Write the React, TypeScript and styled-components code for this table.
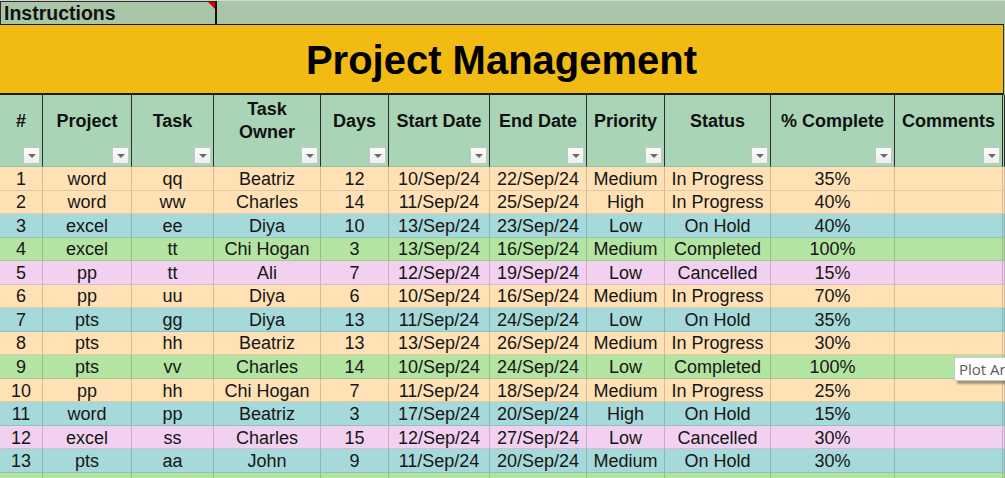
import React from 'react';
import styled, { createGlobalStyle } from 'styled-components';

const GlobalStyle = createGlobalStyle`
  html, body { margin: 0; padding: 0; background: #ffffff; }
  body { font-family: "Liberation Sans", Arial, sans-serif; color: #111; }
`;

const COLS = '43px 89px 82px 107px 68px 101px 97px 78px 106px 124px 108px 1fr';

type Status = 'In Progress' | 'On Hold' | 'Completed' | 'Cancelled';

const STATUS_BG: Record<Status, string> = {
  'In Progress': '#ffe1b5',
  'On Hold': '#a6d9d9',
  Completed: '#b3e4a1',
  Cancelled: '#f1d0f0',
};

interface Task {
  id: number;
  project: string;
  task: string;
  owner: string;
  days: number;
  start: string;
  end: string;
  priority: string;
  status: Status;
  pct: string;
}

const TASKS: Task[] = [
  { id: 1, project: 'word', task: 'qq', owner: 'Beatriz', days: 12, start: '10/Sep/24', end: '22/Sep/24', priority: 'Medium', status: 'In Progress', pct: '35%' },
  { id: 2, project: 'word', task: 'ww', owner: 'Charles', days: 14, start: '11/Sep/24', end: '25/Sep/24', priority: 'High', status: 'In Progress', pct: '40%' },
  { id: 3, project: 'excel', task: 'ee', owner: 'Diya', days: 10, start: '13/Sep/24', end: '23/Sep/24', priority: 'Low', status: 'On Hold', pct: '40%' },
  { id: 4, project: 'excel', task: 'tt', owner: 'Chi Hogan', days: 3, start: '13/Sep/24', end: '16/Sep/24', priority: 'Medium', status: 'Completed', pct: '100%' },
  { id: 5, project: 'pp', task: 'tt', owner: 'Ali', days: 7, start: '12/Sep/24', end: '19/Sep/24', priority: 'Low', status: 'Cancelled', pct: '15%' },
  { id: 6, project: 'pp', task: 'uu', owner: 'Diya', days: 6, start: '10/Sep/24', end: '16/Sep/24', priority: 'Medium', status: 'In Progress', pct: '70%' },
  { id: 7, project: 'pts', task: 'gg', owner: 'Diya', days: 13, start: '11/Sep/24', end: '24/Sep/24', priority: 'Low', status: 'On Hold', pct: '35%' },
  { id: 8, project: 'pts', task: 'hh', owner: 'Beatriz', days: 13, start: '13/Sep/24', end: '26/Sep/24', priority: 'Medium', status: 'In Progress', pct: '30%' },
  { id: 9, project: 'pts', task: 'vv', owner: 'Charles', days: 14, start: '10/Sep/24', end: '24/Sep/24', priority: 'Low', status: 'Completed', pct: '100%' },
  { id: 10, project: 'pp', task: 'hh', owner: 'Chi Hogan', days: 7, start: '11/Sep/24', end: '18/Sep/24', priority: 'Medium', status: 'In Progress', pct: '25%' },
  { id: 11, project: 'word', task: 'pp', owner: 'Beatriz', days: 3, start: '17/Sep/24', end: '20/Sep/24', priority: 'High', status: 'On Hold', pct: '15%' },
  { id: 12, project: 'excel', task: 'ss', owner: 'Charles', days: 15, start: '12/Sep/24', end: '27/Sep/24', priority: 'Low', status: 'Cancelled', pct: '30%' },
  { id: 13, project: 'pts', task: 'aa', owner: 'John', days: 9, start: '11/Sep/24', end: '20/Sep/24', priority: 'Medium', status: 'On Hold', pct: '30%' },
];

const HEADERS: string[][] = [
  ['#'], ['Project'], ['Task'], ['Task', 'Owner'], ['Days'], ['Start Date'], ['End Date'],
  ['Priority'], ['Status'], ['% Complete'], ['Comments'],
];

const Sheet = styled.div`
  position: relative;
  width: 1005px;
  height: 478px;
  overflow: hidden;
  display: flex;
  flex-direction: column;
  background: #a9c6a9;
`;

const TopBar = styled.div`
  flex: 0 0 auto;
  height: 23px;
  border-top: 1px solid #d4d4d4;
  background: #a9c7a8;
  display: flex;
`;

const InstructionsCell = styled.div`
  position: relative;
  width: 211px;
  height: 22px;
  border-top: 1px solid #2a2a2a;
  border-left: 1px solid #2a2a2a;
  border-right: 2px solid #111;
  padding-left: 3px;
  box-sizing: content-box;
  font-size: 19.5px;
  font-weight: 700;
  line-height: 22px;
  color: #111;
  white-space: nowrap;
`;

const CommentFlag = styled.span`
  position: absolute;
  top: 0;
  right: 0;
  width: 0;
  height: 0;
  border-top: 7px solid #e00000;
  border-left: 7px solid transparent;
`;

const TitleBand = styled.div`
  flex: 0 0 auto;
  height: 68px;
  margin-right: 1px;
  border-top: 1px solid #1a1a1a;
  border-bottom: 2px solid #1a1a1a;
  border-right: 1px solid #333;
  background: #f2bb14;
  display: flex;
  align-items: center;
  justify-content: center;
`;

const Title = styled.h1`
  margin: 0;
  font-size: 40px;
  font-weight: 700;
  line-height: 46px;
  color: #000;
  padding-top: 2px;
`;

const HeaderRow = styled.div`
  flex: 0 0 auto;
  display: grid;
  grid-template-columns: ${COLS};
  height: 72px;
  background: #aad4b6;
`;

const HeaderCell = styled.div`
  display: flex;
  flex-direction: column;
  border-right: 1px solid #2b2b2b;
  border-bottom: 1px solid #98bca2;
  min-width: 0;
`;

const HeaderLabel = styled.div`
  flex: 1 1 auto;
  display: flex;
  flex-direction: column;
  align-items: center;
  justify-content: center;
  font-size: 18px;
  font-weight: 700;
  line-height: 23px;
  color: #111;
  text-align: center;
  white-space: nowrap;
`;

const FilterButton = styled.div`
  flex: 0 0 auto;
  align-self: flex-end;
  width: 17px;
  height: 17px;
  margin: 0 2px 2px 0;
  box-sizing: border-box;
  border: 1px solid #c3c8c5;
  background: linear-gradient(#fdfdfd, #eceeed);
  display: flex;
  align-items: center;
  justify-content: center;
  &::after {
    content: '';
    width: 0;
    height: 0;
    border-left: 4px solid transparent;
    border-right: 4px solid transparent;
    border-top: 4px solid #6a6a6a;
    margin-top: 1px;
  }
`;

const Body = styled.div`
  flex: 1 1 auto;
  display: flex;
  flex-direction: column;
`;

const Row = styled.div<{ $bg: string }>`
  flex: 0 0 auto;
  display: grid;
  grid-template-columns: ${COLS};
  height: 23.54px;
  background: ${(p) => p.$bg};
`;

const Cell = styled.div`
  display: flex;
  align-items: center;
  justify-content: center;
  border-right: 1px solid rgba(0, 0, 0, 0.16);
  border-bottom: 1px solid rgba(0, 0, 0, 0.11);
  padding-top: 1px;
  font-size: 18px;
  line-height: 20px;
  color: #161616;
  white-space: nowrap;
  overflow: hidden;
  min-width: 0;
`;

const Tooltip = styled.div`
  position: absolute;
  left: 954px;
  top: 357px;
  height: 22px;
  padding: 0 6px 0 4px;
  background: #ffffff;
  border: 1px solid #c9c9c9;
  box-shadow: 3px 3px 2px rgba(0, 0, 0, 0.35);
  font-family: "Open Sans", "Noto Sans", sans-serif;
  font-size: 15px;
  line-height: 22px;
  color: #5a5a5a;
  white-space: nowrap;
`;

export default function App() {
  return (
    <>
      <GlobalStyle />
      <Sheet>
        <TopBar>
          <InstructionsCell>
            Instructions
            <CommentFlag />
          </InstructionsCell>
        </TopBar>
        <TitleBand>
          <Title>Project Management</Title>
        </TitleBand>
        <HeaderRow>
          {HEADERS.map((lines, i) => (
            <HeaderCell key={i}>
              <HeaderLabel>
                {lines.map((l) => (
                  <span key={l}>{l}</span>
                ))}
              </HeaderLabel>
              <FilterButton />
            </HeaderCell>
          ))}
          <HeaderCell />
        </HeaderRow>
        <Body>
          {TASKS.map((t) => (
            <Row key={t.id} $bg={STATUS_BG[t.status]}>
              <Cell>{t.id}</Cell>
              <Cell>{t.project}</Cell>
              <Cell>{t.task}</Cell>
              <Cell>{t.owner}</Cell>
              <Cell>{t.days}</Cell>
              <Cell>{t.start}</Cell>
              <Cell>{t.end}</Cell>
              <Cell>{t.priority}</Cell>
              <Cell>{t.status}</Cell>
              <Cell>{t.pct}</Cell>
              <Cell />
              <Cell />
            </Row>
          ))}
          <Row $bg={STATUS_BG.Completed}>
            {Array.from({ length: 12 }, (_, i) => (
              <Cell key={i} />
            ))}
          </Row>
        </Body>
        <Tooltip>Plot Area</Tooltip>
      </Sheet>
    </>
  );
}
